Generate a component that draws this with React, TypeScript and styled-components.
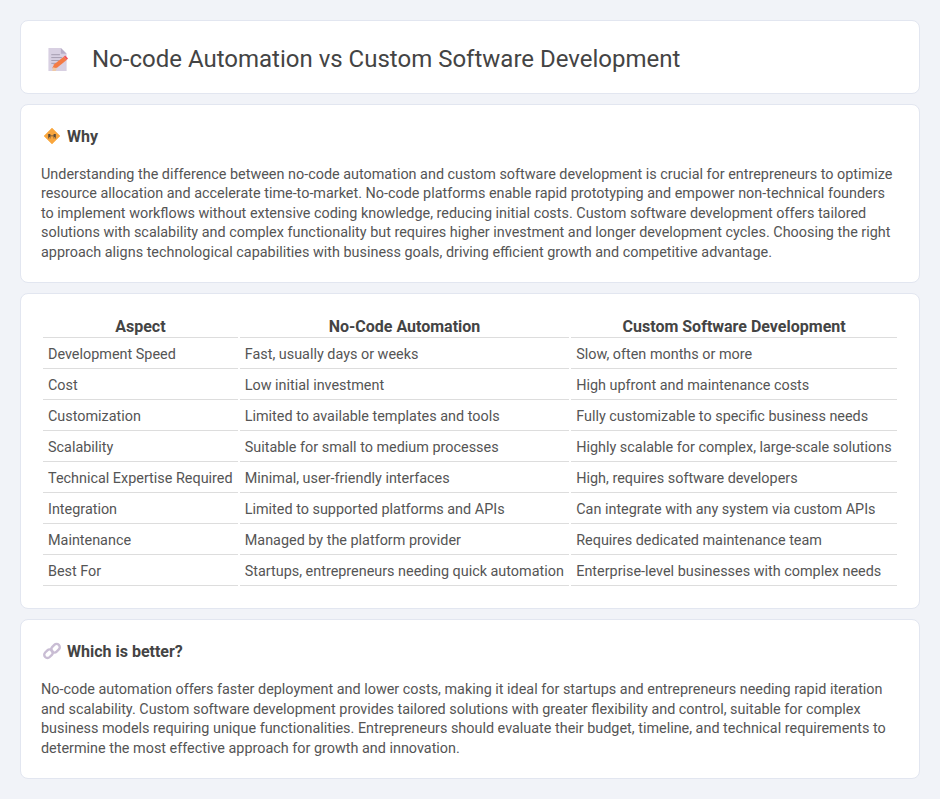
import { FC } from "react";
import styled, { createGlobalStyle } from "styled-components";

const rows = [
  ["Development Speed", "Fast, usually days or weeks", "Slow, often months or more"],
  ["Cost", "Low initial investment", "High upfront and maintenance costs"],
  ["Customization", "Limited to available templates and tools", "Fully customizable to specific business needs"],
  ["Scalability", "Suitable for small to medium processes", "Highly scalable for complex, large-scale solutions"],
  ["Technical Expertise Required", "Minimal, user-friendly interfaces", "High, requires software developers"],
  ["Integration", "Limited to supported platforms and APIs", "Can integrate with any system via custom APIs"],
  ["Maintenance", "Managed by the platform provider", "Requires dedicated maintenance team"],
  ["Best For", "Startups, entrepreneurs needing quick automation", "Enterprise-level businesses with complex needs"],
];

const MemoIcon: FC = () => (
  <svg width="22" height="23" viewBox="0 0 22 24">
    <path d="M1 0h13l6 6v18H1z" fill="#d8d0e2" />
    <path d="M14 0l6 6h-6z" fill="#b9afc8" />
    <path d="M4 7h9M4 10h11M4 13h8M4 16h5" stroke="#a29aae" strokeWidth="1" fill="none" />
    <path d="M5 21l2-4L17 9l3 3.500-10 8z" fill="#f47b45" />
    <path d="M17 9l1.500-1.300 3 3.300-1.500 1.500z" fill="#f2545b" />
    <path d="M5 24l1-4 4 1.500-1.500 2.500z" fill="#f0c9a4" />
  </svg>
);

const CrossingIcon: FC = () => (
  <svg width="18" height="18" viewBox="0 0 18 18">
    <path d="M9 1L17 9 9 17 1 9z" fill="#f9a63e" stroke="#fbbd6c" strokeWidth="1" strokeLinejoin="round" />
    <path d="M5.200 7h2.200v4.500h-.7V10h-.8v1.500h-.7zM10.600 7h2.200v4.500h-.7V10h-.8v1.500h-.7zM7 8.500h4v.8H7z" fill="#5a4a3a" />
  </svg>
);

const LinkIcon: FC = () => (
  <svg width="18" height="18" viewBox="0 0 18 18">
    <g fill="none" stroke="#c9bdd4" strokeWidth="2.400">
      <rect x="0.800" y="8.500" width="9.500" height="6.400" rx="3.200" transform="rotate(-45 5.500 11.700)" />
      <rect x="7.700" y="3" width="9.500" height="6.400" rx="3.200" transform="rotate(-45 12.500 6.200)" />
    </g>
  </svg>
);

const App: FC = () => (
  <>
    <GlobalStyle />
    <Page>
      <HeaderCard>
        <MemoIcon />
        <Title>No-code Automation vs Custom Software Development</Title>
      </HeaderCard>

      <Card>
        <SectionHead>
          <CrossingIcon />
          <SectionTitle>Why</SectionTitle>
        </SectionHead>
        <Body>
          Understanding the difference between no-code automation and custom software development is crucial for
          entrepreneurs to optimize resource allocation and accelerate time-to-market. No-code platforms enable rapid
          prototyping and empower non-technical founders to implement workflows without extensive coding knowledge,
          reducing initial costs. Custom software development offers tailored solutions with scalability and complex
          functionality but requires higher investment and longer development cycles. Choosing the right approach
          aligns technological capabilities with business goals, driving efficient growth and competitive advantage.
        </Body>
      </Card>

      <Card>
        <Table>
          <thead>
            <tr>
              <Th>Aspect</Th>
              <Th>No-Code Automation</Th>
              <Th>Custom Software Development</Th>
            </tr>
          </thead>
          <tbody>
            {rows.map((row) => (
              <tr key={row[0]}>
                {row.map((cell) => (
                  <Td key={cell}>{cell}</Td>
                ))}
              </tr>
            ))}
          </tbody>
        </Table>
      </Card>

      <Card>
        <SectionHead>
          <LinkIcon />
          <SectionTitle>Which is better?</SectionTitle>
        </SectionHead>
        <Body>
          No-code automation offers faster deployment and lower costs, making it ideal for startups and entrepreneurs
          needing rapid iteration and scalability. Custom software development provides tailored solutions with greater
          flexibility and control, suitable for complex business models requiring unique functionalities. Entrepreneurs
          should evaluate their budget, timeline, and technical requirements to determine the most effective approach
          for growth and innovation.
        </Body>
      </Card>
    </Page>
  </>
);

const GlobalStyle = createGlobalStyle`
  html, body {
    margin: 0;
    background: #f1f3f8;
    font-family: Roboto, "Liberation Sans", sans-serif;
    color: #444;
  }

  * {
    box-sizing: border-box;
  }
`;

const Page = styled.div`
  display: flex;
  flex-direction: column;
  gap: 10px;
  padding: 20px;
`;

const Card = styled.section`
  background: #fff;
  border: 1px solid #e2e6f0;
  border-radius: 8px;
  padding: 20px;
`;

const HeaderCard = styled(Card)`
  display: flex;
  align-items: center;
  gap: 23px;
  height: 74px;
  padding: 4px 0 0 26px;
`;

const Title = styled.h1`
  margin: 0;
  font-size: 24px;
  font-weight: 400;
  color: #444;
`;

const SectionHead = styled.div`
  display: flex;
  align-items: center;
  gap: 6px;
  height: 22px;
  margin-bottom: 18px;
  padding-left: 2px;
`;

const SectionTitle = styled.h2`
  margin: 0;
  font-size: 16px;
  font-weight: 700;
  color: #444;
`;

const Body = styled.p`
  margin: 0;
  font-size: 14.400px;
  line-height: 1.350;
  color: #555;
`;

const Table = styled.table`
  width: 100%;
  border-collapse: separate;
  border-spacing: 2px;
  font-size: 14.400px;
`;

const Th = styled.th`
  padding: 0 5px;
  height: 22px;
  font-size: 16px;
  font-weight: 700;
  color: #444;
  border-bottom: 1px solid #ddd;
`;

const Td = styled.td`
  padding: 5px;
  height: 29px;
  color: #555;
  border-bottom: 1px solid #ddd;
`;

export default App;
